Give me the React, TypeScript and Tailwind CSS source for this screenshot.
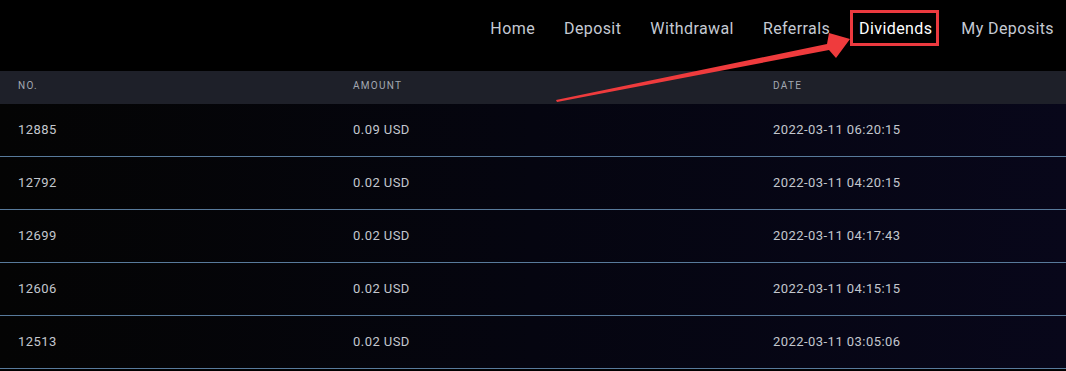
import React from 'react';

const rows = [
  { no: '12885', amount: '0.09 USD', date: '2022-03-11 06:20:15' },
  { no: '12792', amount: '0.02 USD', date: '2022-03-11 04:20:15' },
  { no: '12699', amount: '0.02 USD', date: '2022-03-11 04:17:43' },
  { no: '12606', amount: '0.02 USD', date: '2022-03-11 04:15:15' },
  { no: '12513', amount: '0.02 USD', date: '2022-03-11 03:05:06' },
];

const links = ['Home', 'Deposit', 'Withdrawal', 'Referrals', 'Dividends', 'My Deposits'];

export default function App() {
  return (
    <div
      className="relative w-[1066px] h-[371px] overflow-hidden bg-black"
      style={{ fontFamily: 'Roboto, "Liberation Sans", sans-serif' }}
    >
      <header className="h-[71px] flex items-start justify-end pr-[12px] pt-[19px]">
        <nav className="flex gap-[29px] text-[16px] leading-[20px] tracking-[0.4px]">
          {links.map((l) => (
            <a
              key={l}
              className={l === 'Dividends' ? 'relative text-white' : 'text-[#c5cad3]'}
            >
              {l}
              {l === 'Dividends' && (
                <span className="absolute left-[-9px] right-[-7px] top-[-9px] bottom-[-7px] border-[3px] border-[#ec3a3f]" />
              )}
            </a>
          ))}
        </nav>
      </header>

      <div className="bg-gradient-to-r from-[#040404] via-[#050510] to-[#08071a]">
        <div className="grid grid-cols-[335px_420px_1fr] pl-[18px] pb-[5px] h-[33px] items-center bg-[#1e2029] text-[10px] tracking-[1.3px] text-[#a3a8b2] uppercase">
          <div>No.</div>
          <div>Amount</div>
          <div>Date</div>
        </div>
        {rows.map((r) => (
          <div
            key={r.no}
            className="grid grid-cols-[335px_420px_1fr] pl-[18px] h-[53px] items-center border-b border-[#587a9b] text-[13px] tracking-[0.45px] text-[#c3c7ce]"
          >
            <div>{r.no}</div>
            <div>{r.amount}</div>
            <div>{r.date}</div>
          </div>
        ))}
      </div>

      <svg className="absolute inset-0 pointer-events-none" width="1066" height="371">
        <polygon
          points="556,100 827,44 829,33 850,39 836,58 829,50 557,102"
          fill="#ef3b3d"
        />
      </svg>
    </div>
  );
}
